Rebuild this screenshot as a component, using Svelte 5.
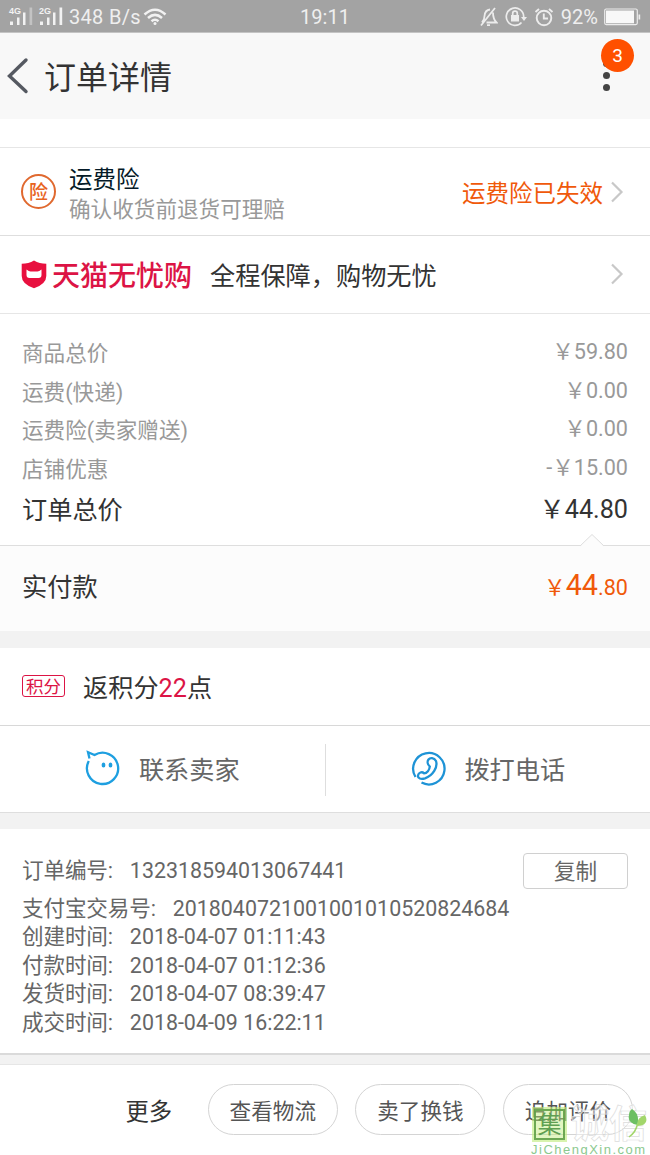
<script>
  const fees = [
    { label: "商品总价", value: "¥59.80" },
    { label: "运费(快递)", value: "¥0.00" },
    { label: "运费险(卖家赠送)", value: "¥0.00" },
    { label: "店铺优惠", value: "-¥15.00" }
  ];

  const orderNo = "132318594013067441";

  const info = [
    { label: "支付宝交易号:", value: "2018040721001001010520824684" },
    { label: "创建时间:", value: "2018-04-07 01:11:43" },
    { label: "付款时间:", value: "2018-04-07 01:12:36" },
    { label: "发货时间:", value: "2018-04-07 08:39:47" },
    { label: "成交时间:", value: "2018-04-09 16:22:11" }
  ];

  const actions = ["查看物流", "卖了换钱", "追加评价"];

  const money = v => v.replace("¥", "￥");
</script>

{#snippet signal(label, last)}
  <svg class="signal" width="24" height="20" viewBox="0 0 24 20">
    <text x="0" y="7">{label}</text>
    <rect x="1" y="14.500" width="3" height="3.500" />
    <rect x="8" y="10.500" width="2.5" height="7.500" />
    <rect x="14" y="5.500" width="2.5" height="12.500" />
    <rect x="20.5" y=".5" width="2.7" height="17.500" opacity={last} />
  </svg>
{/snippet}

{#snippet chevron()}
  <svg class="chevron" width="14" height="22" viewBox="0 0 14 22">
    <path d="M2 1.5 11.5 11 2 20.5" fill="none" stroke="#c8c8c8" stroke-width="2.2" />
  </svg>
{/snippet}

<div class="page">
  <div class="status">
    <div class="left">
      {@render signal("4G", 0.4)}
      {@render signal("2G", 1)}
      <span class="speed">348 B/s</span>
      <svg width="24" height="18" viewBox="0 0 24 18" fill="none" stroke="#f2f2f2" stroke-width="2.5">
        <path d="M1.5 6.5Q12-3 22.500 6.500M5 10Q12 3.800 19 10M8.500 13.200Q12 10.200 15.500 13.200" />
        <circle cx="12" cy="15.500" r="1.500" fill="#f2f2f2" stroke="none" />
      </svg>
    </div>
    <span class="clock">19:11</span>
    <div class="right">
      <svg width="18" height="20" viewBox="0 0 18 20" fill="none" stroke="#ececec" stroke-width="1.8">
        <path d="M2 15.500Q4.500 13 4.500 9Q5 3 10 2.500M13 5.500Q13 12 16.500 15.500H6.500M15 1 1 18.500M7 18.200H10" />
      </svg>
      <svg class="lock" width="23" height="20" viewBox="0 0 23 20" fill="none" stroke="#ececec" stroke-width="1.7">
        <path d="M16.500 15.500A8.700 8.700 0 1 1 18.700 9.500V11" />
        <path d="M16 10H22L19 14Z" fill="#ececec" stroke="none" />
        <rect x="6" y="8" width="8" height="6.500" fill="#ececec" stroke="none" />
        <path d="M7.700 9V6.500a2.300 2.300 0 0 1 4.600 0V9" />
      </svg>
      <svg width="20" height="20" viewBox="0 0 20 20" fill="none" stroke="#ececec" stroke-width="1.9">
        <circle cx="10" cy="11" r="7.300" />
        <path d="M9.800 6.500V11.500H14M1.500 5 5 2M18.500 5 15 2" />
      </svg>
      <span class="percent">92%</span>
      <svg width="37" height="18" viewBox="0 0 37 18">
        <rect x=".7" y="1" width="32.600" height="15.600" rx="1.500" fill="none" stroke="#ececec" stroke-width="1.200" />
        <rect x="2" y="2.500" width="28" height="12.800" fill="#f8f8f8" />
        <rect x="34.500" y="6.500" width="1.700" height="5" fill="#ececec" />
      </svg>
    </div>
  </div>

  <header>
    <svg class="back" width="22" height="38" viewBox="0 0 22 38">
      <path d="M19 3 2.500 19 19 34.500" fill="none" stroke="#555961" stroke-width="3.400" stroke-linecap="round" />
    </svg>
    <h1>订单详情</h1>
    <div class="menu">
      <i></i><i></i><i></i>
      <span class="badge">3</span>
    </div>
  </header>

  <div class="insurance">
    <span class="seal">险</span>
    <div class="desc">
      <b>运费险</b>
      <small>确认收货前退货可理赔</small>
    </div>
    <span class="state">运费险已失效</span>
    {@render chevron()}
  </div>

  <div class="tmall">
    <svg width="26" height="29" viewBox="0 0 26 29">
      <path d="M13 .5Q18.500 3.800 25.300 3.800V16Q25.300 24 13 28.300Q.7 24 .7 16V3.800Q7.500 3.800 13 .5Z" fill="#e8103f" />
      <path d="M5.500 9.500Q8 11.500 9.500 11.500H16.500Q18 11.500 20.500 9.500V15Q20.500 18 17.500 18H8.500Q5.500 18 5.500 15Z" fill="#fff" />
    </svg>
    <span class="brand">天猫无忧购</span>
    <span class="slogan">全程保障，购物无忧</span>
    {@render chevron()}
  </div>

  <div class="fees">
    {#each fees as fee}
      <div class="fee">
        <span>{fee.label}</span>
        <span class="num">{money(fee.value)}</span>
      </div>
    {/each}
    <div class="fee total">
      <span>订单总价</span>
      <span class="num">￥44.80</span>
    </div>
  </div>

  <div class="paid">
    <svg class="notch" width="26" height="14" viewBox="0 0 26 14">
      <path d="M1 13.500 13 1.500 25 13.500V14H1Z" fill="#fcfcfc" />
      <path d="M1 13 13 1.500 25 13" fill="none" stroke="#dedede" />
    </svg>
    <span>实付款</span>
    <span class="price">￥<em>44</em>.80</span>
  </div>

  <div class="gap"></div>

  <div class="points">
    <span class="tag">积分</span>
    <span>返积分<em>22</em>点</span>
  </div>

  <div class="contact">
    <div class="cell">
      <svg width="36" height="36" viewBox="0 0 36 36" fill="none" stroke="#1e9fe0" stroke-width="2.300">
        <path d="M3.800 11A15.600 15.600 0 1 0 9.500 5L3 2.200 4.500 8.500" />
        <ellipse cx="18.500" cy="15" rx="1.900" ry="2.600" fill="#1e9fe0" stroke="none" />
        <ellipse cx="25.500" cy="15" rx="1.900" ry="2.600" fill="#1e9fe0" stroke="none" />
      </svg>
      <span>联系卖家</span>
    </div>
    <div class="cell">
      <svg width="36" height="36" viewBox="0 0 36 36" fill="none" stroke="#1e93d6" stroke-width="2.300">
        <path d="M5.500 27A15.700 15.700 0 1 1 11.500 32.600" />
        <path d="M18.500 9.500C20 7.500 24 7.300 26 11C28 17 23 25.500 15 28.300C11 29.500 7.500 28.500 8 25.500C8.500 22.500 12 21.300 14 23.300C17 23.300 19.500 20 19.800 16.500C17.500 14.500 17 11.500 18.500 9.500Z" />
      </svg>
      <span>拨打电话</span>
    </div>
  </div>

  <div class="gap small"></div>

  <div class="order">
    <div class="line first">
      <span>订单编号:</span>
      <span class="val">{orderNo}</span>
      <button>复制</button>
    </div>
    {#each info as row}
      <div class="line">
        <span>{row.label}</span>
        <span class="val">{row.value}</span>
      </div>
    {/each}
  </div>

  <footer>
    <span class="more">更多</span>
    {#each actions as action}
      <button>{action}</button>
    {/each}
  </footer>

  <div class="watermark">
    <div class="marks">
      <span class="ji">集</span>
      <span class="hollow">诚信</span>
      <svg class="leaf" width="20" height="30" viewBox="0 0 20 30">
        <path d="M4 1Q12 6 9.500 17Q-1 15 1 7Q1 3 4 1Z" fill="#6dbf63" />
        <path d="M17 7Q22 17 9.500 18Q8 10 17 7Z" fill="#a2d66b" />
        <path d="M9.500 16Q8 24 1 29" fill="none" stroke="#a2d66b" stroke-width="1.500" />
      </svg>
    </div>
    <div class="site">JiChengXin.com</div>
  </div>
</div>

<style>
  :global(body) {
    background: #fff;
  }

  .page {
    position: relative;
    width: 650px;
    height: 1155px;
    overflow: hidden;
    background: #fff;
    color: #333;
    font-family: Roboto, "Noto Sans CJK SC", sans-serif;
    font-size: 21.6px;
  }

  .page * {
    box-sizing: border-box;
  }

  em,
  i {
    font-style: normal;
  }

  svg {
    flex: none;
    display: block;
  }

  .status {
    display: grid;
    grid-template-columns: 1fr auto 1fr;
    align-items: center;
    height: 33px;
    padding: 1px 9px 0;
    background: #a3a3a3;
    border-bottom: 1px solid #c4c4c4;
    color: #efefef;
    font-size: 20px;
  }

  .left,
  .right {
    display: flex;
    align-items: center;
  }

  .left {
    gap: 6px;
  }

  .left .speed {
    letter-spacing: 0.3px;
  }

  .left > svg:last-child {
    margin-left: -4px;
  }

  .right {
    justify-content: flex-end;
    gap: 8px;
  }

  .right .lock {
    margin: 0 -2px 0 -1px;
  }

  .right .percent {
    margin: 0 -2px 0 -1px;
  }

  .signal {
    overflow: visible;
    fill: #f2f2f2;
  }

  .signal text {
    font: bold 9px "Liberation Sans", sans-serif;
  }

  header {
    display: flex;
    align-items: center;
    height: 86px;
    padding: 0 40px 0 7px;
    background: #f8f8f8;
  }

  h1 {
    flex: 1;
    margin: 4px 0 0 15px;
    font-size: 32px;
    font-weight: 400;
    line-height: 40px;
  }

  .menu {
    position: relative;
    display: flex;
    flex-direction: column;
    gap: 5px;
    padding-bottom: 1px;
  }

  .menu i {
    width: 7px;
    height: 7px;
    border-radius: 50%;
    background: #444;
  }

  .badge {
    position: absolute;
    left: -2px;
    top: -21px;
    width: 33px;
    height: 33px;
    border-radius: 50%;
    background: #ff5000;
    color: #fff;
    font-size: 19px;
    line-height: 33px;
    text-align: center;
  }

  .insurance {
    display: flex;
    align-items: center;
    height: 89px;
    margin-top: 28px;
    padding: 0 27px 0 21px;
    border-top: 1px solid #e6e6e6;
    border-bottom: 1px solid #dedede;
  }

  .seal {
    width: 35px;
    height: 35px;
    border: 2px solid #e0692f;
    border-radius: 50%;
    color: #e8641e;
    font-size: 19px;
    font-weight: 500;
    line-height: 33px;
    text-align: center;
  }

  .desc {
    flex: 1;
    display: flex;
    flex-direction: column;
    margin-left: 13px;
    padding-top: 6px;
  }

  .desc b {
    color: #051b28;
    font-size: 23.5px;
    font-weight: 400;
    line-height: 30px;
  }

  .desc small {
    color: #999;
    font-size: 21.6px;
    line-height: 30px;
  }

  .state {
    color: #f0590a;
    font-size: 23.5px;
  }

  .chevron {
    margin-left: 7px;
    margin-right: -1px;
  }

  .tmall {
    display: flex;
    align-items: center;
    height: 78px;
    padding: 0 27px 1px 21px;
    border-bottom: 1px solid #e6e6e6;
  }

  .brand {
    margin-left: 5px;
    padding-top: 5px;
    color: #dc1445;
    font-size: 28px;
    font-weight: 500;
    line-height: 36px;
  }

  .slogan {
    flex: 1;
    margin-left: 18px;
    font-size: 25.2px;
  }

  .fees {
    height: 231px;
    padding: 21px 22px 0;
    color: #999;
  }

  .fee {
    display: flex;
    justify-content: space-between;
    height: 38.5px;
    line-height: 38.5px;
  }

  .num {
    line-height: 34.5px;
  }

  .total {
    height: 44px;
    color: #333;
    font-size: 25.2px;
    line-height: 44px;
  }

  .total .num {
    line-height: 41px;
  }

  .paid {
    position: relative;
    display: flex;
    align-items: center;
    justify-content: space-between;
    height: 86px;
    padding: 0 22px 8px;
    border-top: 1px solid #dedede;
    background: #fcfcfc;
    font-size: 25.2px;
  }

  .notch {
    position: absolute;
    right: 45px;
    top: -13px;
  }

  .price {
    color: #f0590a;
    font-size: 21.6px;
  }

  .price em {
    font-size: 28.8px;
  }

  .gap {
    height: 17px;
    background: #f2f2f2;
  }

  .gap.small {
    height: 16px;
  }

  .points {
    display: flex;
    align-items: center;
    height: 78px;
    padding: 0 22px 1px;
    border-bottom: 1px solid #d8d8d8;
    font-size: 25.2px;
  }

  .points em {
    color: #dc1445;
  }

  .tag {
    width: 43px;
    height: 22px;
    margin-right: 18px;
    border: 1px solid #dc1445;
    border-radius: 3px;
    color: #dc1445;
    font-size: 17.5px;
    line-height: 22px;
    text-align: center;
  }

  .contact {
    display: flex;
    height: 87px;
    padding: 18px 0 16px;
    border-bottom: 1px solid #dedede;
    color: #666;
    font-size: 25.2px;
  }

  .cell {
    flex: 1;
    display: flex;
    align-items: center;
    justify-content: center;
    gap: 18px;
    padding: 0 0 4px;
  }

  .cell + .cell {
    border-left: 1px solid #dedede;
  }

  .order {
    height: 224px;
    padding: 23px 22px 0;
    color: #666;
  }

  .line {
    display: flex;
    gap: 17px;
    height: 28.4px;
    line-height: 28.4px;
  }

  .line .val {
    font-size: 21.4px;
  }

  .line span:first-child {
    letter-spacing: -0.15px;
  }

  .first {
    align-items: center;
    height: 43px;
    padding-bottom: 5px;
  }

  .order button {
    width: 105px;
    height: 36px;
    margin-left: auto;
    padding: 0;
    border: 1px solid #d0d0d0;
    border-radius: 4px;
    background: #fff;
    color: #666;
    font: inherit;
    line-height: 35px;
  }

  footer {
    display: flex;
    align-items: center;
    justify-content: flex-end;
    gap: 17.6px;
    height: 102px;
    padding: 9px 17px 1px 0;
    border-top: 2px solid #dadada;
    background: linear-gradient(#f2f2f2 9px, #e6e6e6 9px, #e6e6e6 10px, #fff 10px);
  }

  .more {
    margin-right: 18px;
    padding-top: 2px;
    font-size: 23.4px;
  }

  footer button {
    width: 130px;
    height: 51px;
    padding: 0;
    border: 1px solid #d4d4d4;
    border-radius: 26px;
    background: #fff;
    color: #555;
    font: inherit;
  }

  .watermark {
    position: absolute;
    left: 531px;
    top: 1105px;
    width: 119px;
  }

  .marks {
    display: flex;
    align-items: center;
    gap: 6px;
    height: 38px;
  }

  .ji {
    width: 31px;
    height: 31px;
    margin-left: 3px;
    border: 2px solid rgba(96, 160, 72, 0.9);
    outline: 2px solid rgba(190, 235, 120, 0.6);
    background: rgba(190, 235, 120, 0.45);
    color: #5f9f52;
    font-size: 24px;
    line-height: 28px;
    text-align: center;
  }

  .hollow {
    color: rgba(255, 255, 255, 0.45);
    font-size: 38px;
    font-weight: 700;
    line-height: 38px;
    white-space: nowrap;
    -webkit-text-stroke: 0.7px #dcdcdc;
  }

  .leaf {
    position: absolute;
    left: 97px;
    top: 3px;
  }

  .site {
    color: #8cc98f;
    font-family: "Liberation Sans", sans-serif;
    font-size: 13px;
    letter-spacing: 1.5px;
    line-height: 13px;
    white-space: nowrap;
  }
</style>
